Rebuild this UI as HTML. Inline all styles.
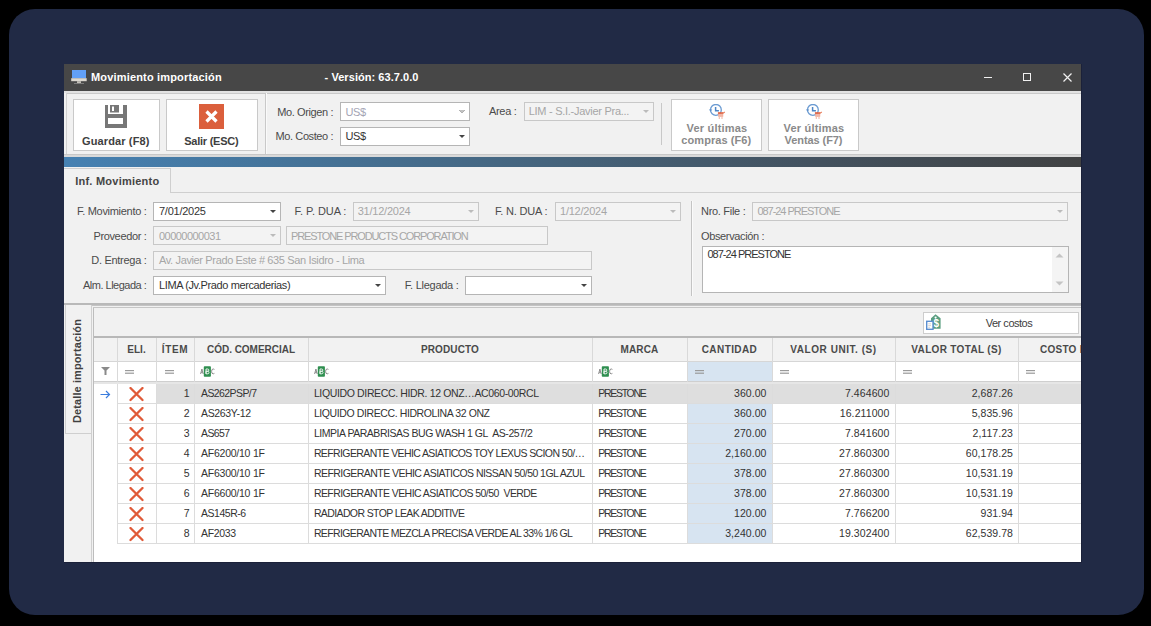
<!DOCTYPE html>
<html><head><meta charset="utf-8"><style>
html,body{margin:0;padding:0;width:1151px;height:626px;overflow:hidden;background:#000}
body>div,body>svg{position:absolute}
.t{position:absolute;white-space:nowrap;line-height:1;font-family:"Liberation Sans", sans-serif}
</style></head><body>
<div style="left:0px;top:0px;width:1151px;height:626px;background:#000"></div><div style="left:9px;top:9px;width:1135px;height:606px;background:#212a45;border-radius:26px"></div><div style="left:64px;top:64px;width:1017px;height:498px;background:#f1f1f1"></div><div style="left:64px;top:64px;width:1017px;height:27px;background:#474747"></div><svg style="position:absolute;left:71px;top:69px" width="16" height="16" viewBox="0 0 16 16"><rect x="1" y="1" width="14" height="8.2" fill="#62a0f7"/><rect x="0.2" y="9.2" width="15.5" height="3" fill="#dcd8d0"/><rect x="6" y="12.2" width="4" height="1.8" fill="#c4c0b8"/><rect x="3" y="14" width="10" height="0.8" fill="#8a8a8a"/></svg><div class="t" style="left:91px;top:71.69px;font-size:11px;font-weight:bold;color:#ffffff;letter-spacing:0.166px;">Movimiento importación</div><div class="t" style="left:324.6px;top:71.69px;font-size:11px;font-weight:bold;color:#ffffff;letter-spacing:0.053px;">- Versión: 63.7.0.0</div><div style="left:984px;top:77px;width:8px;height:1px;background:#f0f0f0"></div><div style="left:1023px;top:73px;width:8px;height:8px;border:1px solid #f0f0f0;box-sizing:border-box"></div><svg style="position:absolute;left:1063px;top:73px" width="9" height="9" viewBox="0 0 9 9"><path d="M0.5 0.5 L8.5 8.5 M8.5 0.5 L0.5 8.5" stroke="#f0f0f0" stroke-width="1.2"/></svg><div style="left:64px;top:91px;width:1017px;height:2px;background:#e2e2e2"></div><div style="left:66px;top:93px;width:1015px;height:1px;background:#c9c9c9"></div><div style="left:66px;top:93px;width:1px;height:61px;background:#d2d2d2"></div><div style="left:64px;top:154px;width:1017px;height:1px;background:#c8c8c8"></div><div style="left:73px;top:99px;width:87px;height:52px;background:#fff;border:1px solid #c9c9c9;box-sizing:border-box"></div><div style="left:166px;top:99px;width:92px;height:52px;background:#fff;border:1px solid #c9c9c9;box-sizing:border-box"></div><svg style="position:absolute;left:105px;top:105px" width="22" height="23" viewBox="0 0 22 23"><g fill="#777"><rect x="0" y="0" width="3" height="23"/><rect x="18" y="0" width="4" height="23"/><rect x="0" y="19" width="22" height="4"/><rect x="0" y="9" width="22" height="4"/><rect x="5" y="0" width="9" height="7.5"/></g><rect x="7" y="1.5" width="2" height="4.5" fill="#fff"/></svg><div class="t" style="left:82px;top:135.69px;font-size:11px;font-weight:bold;color:#404040;letter-spacing:0.126px;">Guardar (F8)</div><svg style="position:absolute;left:199px;top:104px" width="25" height="25" viewBox="0 0 25 25"><rect width="25" height="25" fill="#db5f3c"/><path d="M7.5 7.5 L17.5 17.5 M17.5 7.5 L7.5 17.5" stroke="#fff" stroke-width="3.2"/></svg><div class="t" style="left:184.2px;top:135.69px;font-size:11px;font-weight:bold;color:#404040;letter-spacing:-0.235px;">Salir (ESC)</div><div style="left:265px;top:93px;width:1px;height:61px;background:#c9c9c9"></div><div style="left:266px;top:93px;width:1px;height:61px;background:#fafafa"></div><div class="t" style="left:277.3px;top:107.19px;font-size:11px;font-weight:normal;color:#4b4b4b;letter-spacing:-0.393px;">Mo. Origen :</div><div style="left:340px;top:102px;width:130px;height:19px;background:#fff;border:1px solid #b5b5b5;box-sizing:border-box"></div><svg style="position:absolute;left:459px;top:110px" width="6" height="4" viewBox="0 0 6 4"><path d="M0 0 L6 0 L3 3Z" fill="#444"/></svg><svg style="position:absolute;left:459px;top:110px" width="6" height="4" viewBox="0 0 6 4"><path d="M0 0 L6 0 L3 3Z" fill="#c2c2c2"/></svg><div class="t" style="left:345.4px;top:107.19px;font-size:11px;font-weight:normal;color:#a4a4b4;letter-spacing:-0.3px;">US$</div><div class="t" style="left:275.6px;top:131.49px;font-size:11px;font-weight:normal;color:#4b4b4b;letter-spacing:-0.405px;">Mo. Costeo :</div><div style="left:340px;top:127px;width:130px;height:19px;background:#fff;border:1px solid #b5b5b5;box-sizing:border-box"></div><svg style="position:absolute;left:459px;top:135px" width="6" height="4" viewBox="0 0 6 4"><path d="M0 0 L6 0 L3 3Z" fill="#444"/></svg><div class="t" style="left:345.4px;top:131.49px;font-size:11px;font-weight:normal;color:#333333;letter-spacing:-0.3px;">US$</div><div class="t" style="left:489px;top:106.39px;font-size:11px;font-weight:normal;color:#4b4b4b;letter-spacing:-0.33px;">Area :</div><div style="left:524px;top:102px;width:130px;height:19px;background:#f3f3f3;border:1px solid #c8c8c8;box-sizing:border-box"></div><svg style="position:absolute;left:643px;top:110px" width="6" height="4" viewBox="0 0 6 4"><path d="M0 0 L6 0 L3 3Z" fill="#bbb"/></svg><div class="t" style="left:528.7px;top:106.39px;font-size:11px;font-weight:normal;color:#a6a6a6;letter-spacing:-0.272px;">LIM - S.I.-Javier Pra...</div><div style="left:661px;top:103px;width:1px;height:42px;background:#c8c8c8"></div><div style="left:671px;top:99px;width:91px;height:52px;background:#fff;border:1px solid #c9c9c9;box-sizing:border-box"></div><div style="left:768px;top:99px;width:91px;height:52px;background:#fff;border:1px solid #c9c9c9;box-sizing:border-box"></div><svg style="position:absolute;left:708px;top:104px" width="18" height="17" viewBox="0 0 18 17"><circle cx="7.9" cy="5.9" r="5.4" fill="none" stroke="#6b9bd2" stroke-width="1.3"/><path d="M7.6 3 V6.8 H10.9" fill="none" stroke="#4f86c6" stroke-width="1.5"/><path d="M0.9 5.4 L4.3 5.4 L2.6 7.6 Z" fill="#5b8fcc"/><rect x="9.9" y="8.2" width="5.6" height="1.7" fill="#e0603d"/><rect x="10.2" y="9.9" width="5" height="2.8" fill="#eea08a"/><path d="M10.6 11 H14.8" stroke="#fff" stroke-width="0.5"/><path d="M15.3 9 L16.8 8" stroke="#e8805f" stroke-width="1.1"/><circle cx="11.3" cy="14.1" r="0.75" fill="#eea08a"/><circle cx="14" cy="14.1" r="0.75" fill="#eea08a"/></svg><svg style="position:absolute;left:805px;top:104px" width="18" height="17" viewBox="0 0 18 17"><circle cx="7.9" cy="5.9" r="5.4" fill="none" stroke="#6b9bd2" stroke-width="1.3"/><path d="M7.6 3 V6.8 H10.9" fill="none" stroke="#4f86c6" stroke-width="1.5"/><path d="M0.9 5.4 L4.3 5.4 L2.6 7.6 Z" fill="#5b8fcc"/><rect x="9.9" y="8.2" width="5.6" height="1.7" fill="#e0603d"/><rect x="10.2" y="9.9" width="5" height="2.8" fill="#eea08a"/><path d="M10.6 11 H14.8" stroke="#fff" stroke-width="0.5"/><path d="M15.3 9 L16.8 8" stroke="#e8805f" stroke-width="1.1"/><circle cx="11.3" cy="14.1" r="0.75" fill="#eea08a"/><circle cx="14" cy="14.1" r="0.75" fill="#eea08a"/></svg><div class="t" style="left:617.0px;top:122.69px;width:200px;text-align:center;font-size:11px;font-weight:bold;color:#8a8a8a;letter-spacing:0.19px;">Ver últimas</div><div class="t" style="left:616.3px;top:134.69px;width:200px;text-align:center;font-size:11px;font-weight:bold;color:#8a8a8a;letter-spacing:0.075px;">compras (F6)</div><div class="t" style="left:714.0px;top:122.69px;width:200px;text-align:center;font-size:11px;font-weight:bold;color:#8a8a8a;letter-spacing:0.19px;">Ver últimas</div><div class="t" style="left:713.5px;top:134.69px;width:200px;text-align:center;font-size:11px;font-weight:bold;color:#8a8a8a;letter-spacing:-0.069px;">Ventas (F7)</div><div style="left:64px;top:157px;width:1017px;height:10px;background:linear-gradient(to right,#4681b2 0%,#457398 23.5%,#45637b 49%,#43515e 74.6%,#414243 100%)"></div><div style="left:64px;top:155px;width:1017px;height:2px;background:#d9d9d9"></div><div style="left:64px;top:192px;width:1017px;height:1px;background:#cfcfcf"></div><div style="left:64px;top:168px;width:107px;height:25px;background:#f1f1f1;border-top:1px solid #cfcfcf;border-right:1px solid #cfcfcf;box-sizing:border-box"></div><div class="t" style="left:75.2px;top:175.69px;font-size:11px;font-weight:bold;color:#454545;letter-spacing:0.238px;">Inf. Movimiento</div><div class="t" style="left:77px;top:205.69px;font-size:11px;font-weight:normal;color:#4b4b4b;letter-spacing:-0.298px;">F. Movimiento :</div><div style="left:153px;top:202px;width:128px;height:19px;background:#fff;border:1px solid #b5b5b5;box-sizing:border-box"></div><svg style="position:absolute;left:270px;top:210px" width="6" height="4" viewBox="0 0 6 4"><path d="M0 0 L6 0 L3 3Z" fill="#444"/></svg><div class="t" style="left:159px;top:205.69px;font-size:11px;font-weight:normal;color:#333333;letter-spacing:-0.255px;">7/01/2025</div><div class="t" style="left:93.4px;top:230.69px;font-size:11px;font-weight:normal;color:#4b4b4b;letter-spacing:-0.347px;">Proveedor :</div><div style="left:153px;top:226px;width:128px;height:19px;background:#f3f3f3;border:1px solid #c8c8c8;box-sizing:border-box"></div><svg style="position:absolute;left:270px;top:234px" width="6" height="4" viewBox="0 0 6 4"><path d="M0 0 L6 0 L3 3Z" fill="#bbb"/></svg><div class="t" style="left:159px;top:230.69px;font-size:11px;font-weight:normal;color:#a6a6a6;letter-spacing:-0.53px;">00000000031</div><div style="left:286px;top:226px;width:262px;height:19px;background:#f3f3f3;border:1px solid #c8c8c8;box-sizing:border-box"></div><div class="t" style="left:291px;top:230.69px;font-size:11px;font-weight:normal;color:#a6a6a6;letter-spacing:-1.126px;">PRESTONE PRODUCTS CORPORATION</div><div class="t" style="left:91.3px;top:255.19px;font-size:11px;font-weight:normal;color:#4b4b4b;letter-spacing:-0.291px;">D. Entrega :</div><div style="left:153px;top:251px;width:439px;height:19px;background:#f3f3f3;border:1px solid #c8c8c8;box-sizing:border-box"></div><div class="t" style="left:159px;top:255.19px;font-size:11px;font-weight:normal;color:#a6a6a6;letter-spacing:-0.36px;">Av. Javier Prado Este # 635 San Isidro - Lima</div><div class="t" style="left:83px;top:279.69px;font-size:11px;font-weight:normal;color:#4b4b4b;letter-spacing:-0.502px;">Alm. Llegada :</div><div style="left:153px;top:276px;width:233px;height:19px;background:#fff;border:1px solid #b5b5b5;box-sizing:border-box"></div><svg style="position:absolute;left:375px;top:284px" width="6" height="4" viewBox="0 0 6 4"><path d="M0 0 L6 0 L3 3Z" fill="#444"/></svg><div class="t" style="left:159px;top:279.69px;font-size:11px;font-weight:normal;color:#333333;letter-spacing:-0.386px;">LIMA (Jv.Prado mercaderias)</div><div class="t" style="left:294.6px;top:205.69px;font-size:11px;font-weight:normal;color:#4b4b4b;letter-spacing:-0.057px;">F. P. DUA :</div><div style="left:353px;top:202px;width:126px;height:19px;background:#f3f3f3;border:1px solid #c8c8c8;box-sizing:border-box"></div><svg style="position:absolute;left:468px;top:210px" width="6" height="4" viewBox="0 0 6 4"><path d="M0 0 L6 0 L3 3Z" fill="#bbb"/></svg><div class="t" style="left:357.7px;top:205.69px;font-size:11px;font-weight:normal;color:#a6a6a6;letter-spacing:-0.228px;">31/12/2024</div><div class="t" style="left:495px;top:205.69px;font-size:11px;font-weight:normal;color:#4b4b4b;letter-spacing:-0.19px;">F. N. DUA :</div><div style="left:555px;top:202px;width:126px;height:19px;background:#f3f3f3;border:1px solid #c8c8c8;box-sizing:border-box"></div><svg style="position:absolute;left:670px;top:210px" width="6" height="4" viewBox="0 0 6 4"><path d="M0 0 L6 0 L3 3Z" fill="#bbb"/></svg><div class="t" style="left:560px;top:205.69px;font-size:11px;font-weight:normal;color:#a6a6a6;letter-spacing:-0.242px;">1/12/2024</div><div class="t" style="left:404.8px;top:279.69px;font-size:11px;font-weight:normal;color:#4b4b4b;letter-spacing:-0.261px;">F. Llegada :</div><div style="left:465px;top:276px;width:127px;height:19px;background:#fff;border:1px solid #b5b5b5;box-sizing:border-box"></div><svg style="position:absolute;left:581px;top:284px" width="6" height="4" viewBox="0 0 6 4"><path d="M0 0 L6 0 L3 3Z" fill="#444"/></svg><div style="left:691px;top:201px;width:1px;height:95px;background:#c4c4c4"></div><div style="left:692px;top:201px;width:1px;height:95px;background:#fafafa"></div><div class="t" style="left:701px;top:205.69px;font-size:11px;font-weight:normal;color:#4b4b4b;letter-spacing:-0.297px;">Nro. File :</div><div style="left:752px;top:202px;width:316px;height:19px;background:#f3f3f3;border:1px solid #c8c8c8;box-sizing:border-box"></div><svg style="position:absolute;left:1057px;top:210px" width="6" height="4" viewBox="0 0 6 4"><path d="M0 0 L6 0 L3 3Z" fill="#bbb"/></svg><div class="t" style="left:757.4px;top:205.69px;font-size:11px;font-weight:normal;color:#a6a6a6;letter-spacing:-1.03px;">087-24 PRESTONE</div><div class="t" style="left:701px;top:230.69px;font-size:11px;font-weight:normal;color:#4b4b4b;letter-spacing:-0.364px;">Observación :</div><div style="left:702px;top:246px;width:367px;height:47px;background:#fff;border:1px solid #b5b5b5;box-sizing:border-box"></div><div style="left:1052px;top:247px;width:16px;height:45px;background:#f4f4f4"></div><svg style="position:absolute;left:1055px;top:253px" width="9" height="5" viewBox="0 0 9 5"><path d="M0.5 4.5 L4.5 0.5 L8.5 4.5Z" fill="#c4c4c4"/></svg><svg style="position:absolute;left:1055px;top:281px" width="9" height="5" viewBox="0 0 9 5"><path d="M0.5 0.5 L4.5 4.5 L8.5 0.5Z" fill="#c4c4c4"/></svg><div class="t" style="left:707.4px;top:248.69px;font-size:11px;font-weight:normal;color:#333333;letter-spacing:-0.973px;">087-24 PRESTONE</div><div style="left:64px;top:303px;width:1017px;height:2px;background:#b9b9b9"></div><div style="left:64px;top:305px;width:29px;height:257px;background:#f1f1f1"></div><div style="left:65px;top:305px;width:27px;height:129px;background:#f1f1f1;border:1px solid #cfcfcf;border-top:none;box-sizing:border-box"></div><div style="left:91px;top:305px;width:1px;height:257px;background:#d0d0d0"></div><div style="left:92px;top:305px;width:989px;height:1px;background:#c4c4c4"></div><div class="t" style="left:77px;top:371px;width:0;height:0;"><div style="position:absolute;left:-52px;top:-7px;width:104px;height:14px;line-height:14px;text-align:center;transform:rotate(-90deg);font-size:11px;font-weight:bold;color:#404040;letter-spacing:0.1px;white-space:nowrap">Detalle importación</div></div><div style="left:93px;top:307px;width:1px;height:255px;background:#bdbdbd"></div><div style="left:93px;top:307px;width:988px;height:1px;background:#c6c6c6"></div><div style="left:94px;top:308px;width:987px;height:254px;background:#fff"></div><div style="left:94px;top:308px;width:987px;height:28px;background:#f1f1f1"></div><div style="left:94px;top:336px;width:987px;height:2px;background:#b8b8b8"></div><div style="left:923px;top:312px;width:156px;height:22px;background:#fff;border:1px solid #cdcdcd;box-sizing:border-box"></div><svg style="position:absolute;left:926px;top:314px" width="16" height="17" viewBox="0 0 16 17"><path d="M5 4.3 L9.5 0.3 L14.6 4.3 L14.6 14.8 L5 14.8 Z" fill="#5a9e80"/><circle cx="9.6" cy="3.6" r="1.1" fill="#fff"/><text x="10.4" y="13.4" font-size="10" font-weight="bold" fill="#fff" text-anchor="middle" font-family="Liberation Sans">$</text><rect x="0.7" y="7.3" width="6.3" height="8" fill="#fff" stroke="#5b8fd0" stroke-width="1.4"/><path d="M2.2 9.8 H5 M2.2 11.6 H5 M2.2 13.3 H4" stroke="#bbb" stroke-width="0.6"/></svg><div class="t" style="left:949.0px;top:317.69px;width:120px;text-align:center;font-size:11px;font-weight:normal;color:#404040;letter-spacing:-0.484px;">Ver costos</div><div style="left:94px;top:338px;width:987px;height:23px;background:#f2f2f2"></div><div style="left:94px;top:361px;width:987px;height:1px;background:#d6d6d6"></div><div style="left:94px;top:362px;width:987px;height:19px;background:#fff"></div><div style="left:687px;top:362px;width:85px;height:19px;background:#d7e4f1"></div><div style="left:94px;top:381px;width:987px;height:1px;background:#cfcfcf"></div><div style="left:94px;top:382px;width:987px;height:2px;background:#e6e6e6"></div><div style="left:117px;top:338px;width:1px;height:44px;background:#d9d9d9"></div><div style="left:156px;top:338px;width:1px;height:44px;background:#d9d9d9"></div><div style="left:194px;top:338px;width:1px;height:44px;background:#d9d9d9"></div><div style="left:308px;top:338px;width:1px;height:44px;background:#d9d9d9"></div><div style="left:592px;top:338px;width:1px;height:44px;background:#d9d9d9"></div><div style="left:687px;top:338px;width:1px;height:44px;background:#d9d9d9"></div><div style="left:772px;top:338px;width:1px;height:44px;background:#d9d9d9"></div><div style="left:895px;top:338px;width:1px;height:44px;background:#d9d9d9"></div><div style="left:1018px;top:338px;width:1px;height:44px;background:#d9d9d9"></div><div class="t" style="left:36.5px;top:344.54px;width:200px;text-align:center;font-size:10px;font-weight:bold;color:#4a4a4a;letter-spacing:0.055px;">ELI.</div><div class="t" style="left:75.0px;top:344.54px;width:200px;text-align:center;font-size:10px;font-weight:bold;color:#4a4a4a;letter-spacing:0.671px;">ÍTEM</div><div class="t" style="left:151.0px;top:344.54px;width:200px;text-align:center;font-size:10px;font-weight:bold;color:#4a4a4a;letter-spacing:-0.025px;">CÓD. COMERCIAL</div><div class="t" style="left:350.0px;top:344.54px;width:200px;text-align:center;font-size:10px;font-weight:bold;color:#4a4a4a;letter-spacing:0.123px;">PRODUCTO</div><div class="t" style="left:539.5px;top:344.54px;width:200px;text-align:center;font-size:10px;font-weight:bold;color:#4a4a4a;letter-spacing:0.146px;">MARCA</div><div class="t" style="left:629.5px;top:344.54px;width:200px;text-align:center;font-size:10px;font-weight:bold;color:#4a4a4a;letter-spacing:0.412px;">CANTIDAD</div><div class="t" style="left:733.5px;top:344.54px;width:200px;text-align:center;font-size:10px;font-weight:bold;color:#4a4a4a;letter-spacing:0.547px;">VALOR UNIT. (S)</div><div class="t" style="left:856.5px;top:344.54px;width:200px;text-align:center;font-size:10px;font-weight:bold;color:#4a4a4a;letter-spacing:0.331px;">VALOR TOTAL (S)</div><div class="t" style="left:1040px;top:344.54px;font-size:10px;font-weight:bold;color:#4a4a4a;letter-spacing:0.25px;">COSTO I</div><svg style="position:absolute;left:101px;top:367px" width="9" height="8" viewBox="0 0 9 8"><path d="M0 0 H9 L5.5 3.5 V8 H3.5 V3.5 Z" fill="#8a8a8a"/></svg><svg style="position:absolute;left:125px;top:370px" width="9" height="4" viewBox="0 0 9 4"><rect x="0" y="0" width="9" height="1.2" fill="#9a9a9a"/><rect x="0" y="2.6" width="9" height="1.2" fill="#9a9a9a"/></svg><svg style="position:absolute;left:165px;top:370px" width="9" height="4" viewBox="0 0 9 4"><rect x="0" y="0" width="9" height="1.2" fill="#9a9a9a"/><rect x="0" y="2.6" width="9" height="1.2" fill="#9a9a9a"/></svg><svg style="position:absolute;left:200px;top:366px" width="16" height="11" viewBox="0 0 16 11"><path d="M0.6 8 L1.9 3 L3.2 8 M1 6.3 H2.8" fill="none" stroke="#8c8c8c" stroke-width="1"/><rect x="3.8" y="0.2" width="7.1" height="10.6" rx="0.8" fill="#2f8f50"/><path d="M6 3 H7.8 Q8.8 3 8.8 4.2 Q8.8 5.3 7.6 5.3 H6 M6 5.3 H7.9 Q9 5.3 9 6.6 Q9 7.8 7.8 7.8 H6 Z M6 3 V7.8" fill="none" stroke="#e8f3ec" stroke-width="1"/><path d="M14.4 3.4 Q13.8 3 13.1 3 Q11.6 3 11.6 5.4 Q11.6 7.8 13.1 7.8 Q13.8 7.8 14.4 7.4" fill="none" stroke="#8c8c8c" stroke-width="1"/></svg><svg style="position:absolute;left:314px;top:366px" width="16" height="11" viewBox="0 0 16 11"><path d="M0.6 8 L1.9 3 L3.2 8 M1 6.3 H2.8" fill="none" stroke="#8c8c8c" stroke-width="1"/><rect x="3.8" y="0.2" width="7.1" height="10.6" rx="0.8" fill="#2f8f50"/><path d="M6 3 H7.8 Q8.8 3 8.8 4.2 Q8.8 5.3 7.6 5.3 H6 M6 5.3 H7.9 Q9 5.3 9 6.6 Q9 7.8 7.8 7.8 H6 Z M6 3 V7.8" fill="none" stroke="#e8f3ec" stroke-width="1"/><path d="M14.4 3.4 Q13.8 3 13.1 3 Q11.6 3 11.6 5.4 Q11.6 7.8 13.1 7.8 Q13.8 7.8 14.4 7.4" fill="none" stroke="#8c8c8c" stroke-width="1"/></svg><svg style="position:absolute;left:598px;top:366px" width="16" height="11" viewBox="0 0 16 11"><path d="M0.6 8 L1.9 3 L3.2 8 M1 6.3 H2.8" fill="none" stroke="#8c8c8c" stroke-width="1"/><rect x="3.8" y="0.2" width="7.1" height="10.6" rx="0.8" fill="#2f8f50"/><path d="M6 3 H7.8 Q8.8 3 8.8 4.2 Q8.8 5.3 7.6 5.3 H6 M6 5.3 H7.9 Q9 5.3 9 6.6 Q9 7.8 7.8 7.8 H6 Z M6 3 V7.8" fill="none" stroke="#e8f3ec" stroke-width="1"/><path d="M14.4 3.4 Q13.8 3 13.1 3 Q11.6 3 11.6 5.4 Q11.6 7.8 13.1 7.8 Q13.8 7.8 14.4 7.4" fill="none" stroke="#8c8c8c" stroke-width="1"/></svg><svg style="position:absolute;left:695px;top:370px" width="9" height="4" viewBox="0 0 9 4"><rect x="0" y="0" width="9" height="1.2" fill="#9a9a9a"/><rect x="0" y="2.6" width="9" height="1.2" fill="#9a9a9a"/></svg><svg style="position:absolute;left:780px;top:370px" width="9" height="4" viewBox="0 0 9 4"><rect x="0" y="0" width="9" height="1.2" fill="#9a9a9a"/><rect x="0" y="2.6" width="9" height="1.2" fill="#9a9a9a"/></svg><svg style="position:absolute;left:903px;top:370px" width="9" height="4" viewBox="0 0 9 4"><rect x="0" y="0" width="9" height="1.2" fill="#9a9a9a"/><rect x="0" y="2.6" width="9" height="1.2" fill="#9a9a9a"/></svg><svg style="position:absolute;left:1026px;top:370px" width="9" height="4" viewBox="0 0 9 4"><rect x="0" y="0" width="9" height="1.2" fill="#9a9a9a"/><rect x="0" y="2.6" width="9" height="1.2" fill="#9a9a9a"/></svg><div style="left:156px;top:384px;width:925px;height:19px;background:#dedede"></div><div style="left:117px;top:403px;width:964px;height:1px;background:#dcdcdc"></div><div style="left:117px;top:384px;width:1px;height:20px;background:#dcdcdc"></div><div style="left:156px;top:384px;width:1px;height:20px;background:#dcdcdc"></div><div style="left:194px;top:384px;width:1px;height:20px;background:#dcdcdc"></div><div style="left:308px;top:384px;width:1px;height:20px;background:#dcdcdc"></div><div style="left:592px;top:384px;width:1px;height:20px;background:#dcdcdc"></div><div style="left:687px;top:384px;width:1px;height:20px;background:#dcdcdc"></div><div style="left:772px;top:384px;width:1px;height:20px;background:#dcdcdc"></div><div style="left:895px;top:384px;width:1px;height:20px;background:#dcdcdc"></div><div style="left:1018px;top:384px;width:1px;height:20px;background:#dcdcdc"></div><svg style="position:absolute;left:129px;top:387px" width="15" height="15" viewBox="0 0 15 15"><path d="M1.5 1 L13.5 13 M13.5 1 L1.5 13" stroke="#e05a38" stroke-width="2.3" stroke-linecap="round"/></svg><div class="t" style="left:-410.5px;top:388.31px;width:600px;text-align:right;font-size:10.5px;font-weight:normal;color:#333333;">1</div><div class="t" style="left:201px;top:388.31px;font-size:10.5px;font-weight:normal;color:#333333;letter-spacing:-0.588px;">AS262PSP/7</div><div class="t" style="left:313.9px;top:388.31px;font-size:10.5px;font-weight:normal;color:#333333;letter-spacing:-0.36px;">LIQUIDO DIRECC. HIDR. 12 ONZ…AC060-00RCL</div><div class="t" style="left:598.2px;top:388.31px;font-size:10.5px;font-weight:normal;color:#333333;letter-spacing:-1.282px;">PRESTONE</div><div class="t" style="left:166.5px;top:388.31px;width:600px;text-align:right;font-size:10.5px;font-weight:normal;color:#333333;letter-spacing:0.05px;">360.00</div><div class="t" style="left:289.5px;top:388.31px;width:600px;text-align:right;font-size:10.5px;font-weight:normal;color:#333333;letter-spacing:0.1px;">7.464600</div><div class="t" style="left:413px;top:388.31px;width:600px;text-align:right;font-size:10.5px;font-weight:normal;color:#333333;letter-spacing:0.05px;">2,687.26</div><div style="left:687px;top:404px;width:85px;height:19px;background:#d7e4f1"></div><div style="left:117px;top:423px;width:964px;height:1px;background:#dcdcdc"></div><div style="left:117px;top:404px;width:1px;height:20px;background:#dcdcdc"></div><div style="left:156px;top:404px;width:1px;height:20px;background:#dcdcdc"></div><div style="left:194px;top:404px;width:1px;height:20px;background:#dcdcdc"></div><div style="left:308px;top:404px;width:1px;height:20px;background:#dcdcdc"></div><div style="left:592px;top:404px;width:1px;height:20px;background:#dcdcdc"></div><div style="left:687px;top:404px;width:1px;height:20px;background:#dcdcdc"></div><div style="left:772px;top:404px;width:1px;height:20px;background:#dcdcdc"></div><div style="left:895px;top:404px;width:1px;height:20px;background:#dcdcdc"></div><div style="left:1018px;top:404px;width:1px;height:20px;background:#dcdcdc"></div><svg style="position:absolute;left:129px;top:407px" width="15" height="15" viewBox="0 0 15 15"><path d="M1.5 1 L13.5 13 M13.5 1 L1.5 13" stroke="#e05a38" stroke-width="2.3" stroke-linecap="round"/></svg><div class="t" style="left:-410.5px;top:408.31px;width:600px;text-align:right;font-size:10.5px;font-weight:normal;color:#333333;">2</div><div class="t" style="left:201px;top:408.31px;font-size:10.5px;font-weight:normal;color:#333333;letter-spacing:-0.343px;">AS263Y-12</div><div class="t" style="left:313.9px;top:408.31px;font-size:10.5px;font-weight:normal;color:#333333;letter-spacing:-0.398px;">LIQUIDO DIRECC. HIDROLINA 32 ONZ</div><div class="t" style="left:598.2px;top:408.31px;font-size:10.5px;font-weight:normal;color:#333333;letter-spacing:-1.282px;">PRESTONE</div><div class="t" style="left:166.5px;top:408.31px;width:600px;text-align:right;font-size:10.5px;font-weight:normal;color:#333333;letter-spacing:0.05px;">360.00</div><div class="t" style="left:289.5px;top:408.31px;width:600px;text-align:right;font-size:10.5px;font-weight:normal;color:#333333;letter-spacing:0.1px;">16.211000</div><div class="t" style="left:413px;top:408.31px;width:600px;text-align:right;font-size:10.5px;font-weight:normal;color:#333333;letter-spacing:0.05px;">5,835.96</div><div style="left:687px;top:424px;width:85px;height:19px;background:#d7e4f1"></div><div style="left:117px;top:443px;width:964px;height:1px;background:#dcdcdc"></div><div style="left:117px;top:424px;width:1px;height:20px;background:#dcdcdc"></div><div style="left:156px;top:424px;width:1px;height:20px;background:#dcdcdc"></div><div style="left:194px;top:424px;width:1px;height:20px;background:#dcdcdc"></div><div style="left:308px;top:424px;width:1px;height:20px;background:#dcdcdc"></div><div style="left:592px;top:424px;width:1px;height:20px;background:#dcdcdc"></div><div style="left:687px;top:424px;width:1px;height:20px;background:#dcdcdc"></div><div style="left:772px;top:424px;width:1px;height:20px;background:#dcdcdc"></div><div style="left:895px;top:424px;width:1px;height:20px;background:#dcdcdc"></div><div style="left:1018px;top:424px;width:1px;height:20px;background:#dcdcdc"></div><svg style="position:absolute;left:129px;top:427px" width="15" height="15" viewBox="0 0 15 15"><path d="M1.5 1 L13.5 13 M13.5 1 L1.5 13" stroke="#e05a38" stroke-width="2.3" stroke-linecap="round"/></svg><div class="t" style="left:-410.5px;top:428.31px;width:600px;text-align:right;font-size:10.5px;font-weight:normal;color:#333333;">3</div><div class="t" style="left:201px;top:428.31px;font-size:10.5px;font-weight:normal;color:#333333;letter-spacing:-0.582px;">AS657</div><div class="t" style="left:313.9px;top:428.31px;font-size:10.5px;font-weight:normal;color:#333333;letter-spacing:-0.465px;">LIMPIA PARABRISAS BUG WASH 1 GL&nbsp; AS-257/2</div><div class="t" style="left:598.2px;top:428.31px;font-size:10.5px;font-weight:normal;color:#333333;letter-spacing:-1.282px;">PRESTONE</div><div class="t" style="left:166.5px;top:428.31px;width:600px;text-align:right;font-size:10.5px;font-weight:normal;color:#333333;letter-spacing:0.05px;">270.00</div><div class="t" style="left:289.5px;top:428.31px;width:600px;text-align:right;font-size:10.5px;font-weight:normal;color:#333333;letter-spacing:0.1px;">7.841600</div><div class="t" style="left:413px;top:428.31px;width:600px;text-align:right;font-size:10.5px;font-weight:normal;color:#333333;letter-spacing:0.05px;">2,117.23</div><div style="left:687px;top:444px;width:85px;height:19px;background:#d7e4f1"></div><div style="left:117px;top:463px;width:964px;height:1px;background:#dcdcdc"></div><div style="left:117px;top:444px;width:1px;height:20px;background:#dcdcdc"></div><div style="left:156px;top:444px;width:1px;height:20px;background:#dcdcdc"></div><div style="left:194px;top:444px;width:1px;height:20px;background:#dcdcdc"></div><div style="left:308px;top:444px;width:1px;height:20px;background:#dcdcdc"></div><div style="left:592px;top:444px;width:1px;height:20px;background:#dcdcdc"></div><div style="left:687px;top:444px;width:1px;height:20px;background:#dcdcdc"></div><div style="left:772px;top:444px;width:1px;height:20px;background:#dcdcdc"></div><div style="left:895px;top:444px;width:1px;height:20px;background:#dcdcdc"></div><div style="left:1018px;top:444px;width:1px;height:20px;background:#dcdcdc"></div><svg style="position:absolute;left:129px;top:447px" width="15" height="15" viewBox="0 0 15 15"><path d="M1.5 1 L13.5 13 M13.5 1 L1.5 13" stroke="#e05a38" stroke-width="2.3" stroke-linecap="round"/></svg><div class="t" style="left:-410.5px;top:448.31px;width:600px;text-align:right;font-size:10.5px;font-weight:normal;color:#333333;">4</div><div class="t" style="left:201px;top:448.31px;font-size:10.5px;font-weight:normal;color:#333333;letter-spacing:-0.24px;">AF6200/10 1F</div><div class="t" style="left:313.9px;top:448.31px;font-size:10.5px;font-weight:normal;color:#333333;letter-spacing:-0.609px;">REFRIGERANTE VEHIC ASIATICOS TOY LEXUS SCION 50/…</div><div class="t" style="left:598.2px;top:448.31px;font-size:10.5px;font-weight:normal;color:#333333;letter-spacing:-1.282px;">PRESTONE</div><div class="t" style="left:166.5px;top:448.31px;width:600px;text-align:right;font-size:10.5px;font-weight:normal;color:#333333;letter-spacing:0.05px;">2,160.00</div><div class="t" style="left:289.5px;top:448.31px;width:600px;text-align:right;font-size:10.5px;font-weight:normal;color:#333333;letter-spacing:0.1px;">27.860300</div><div class="t" style="left:413px;top:448.31px;width:600px;text-align:right;font-size:10.5px;font-weight:normal;color:#333333;letter-spacing:0.05px;">60,178.25</div><div style="left:687px;top:464px;width:85px;height:19px;background:#d7e4f1"></div><div style="left:117px;top:483px;width:964px;height:1px;background:#dcdcdc"></div><div style="left:117px;top:464px;width:1px;height:20px;background:#dcdcdc"></div><div style="left:156px;top:464px;width:1px;height:20px;background:#dcdcdc"></div><div style="left:194px;top:464px;width:1px;height:20px;background:#dcdcdc"></div><div style="left:308px;top:464px;width:1px;height:20px;background:#dcdcdc"></div><div style="left:592px;top:464px;width:1px;height:20px;background:#dcdcdc"></div><div style="left:687px;top:464px;width:1px;height:20px;background:#dcdcdc"></div><div style="left:772px;top:464px;width:1px;height:20px;background:#dcdcdc"></div><div style="left:895px;top:464px;width:1px;height:20px;background:#dcdcdc"></div><div style="left:1018px;top:464px;width:1px;height:20px;background:#dcdcdc"></div><svg style="position:absolute;left:129px;top:467px" width="15" height="15" viewBox="0 0 15 15"><path d="M1.5 1 L13.5 13 M13.5 1 L1.5 13" stroke="#e05a38" stroke-width="2.3" stroke-linecap="round"/></svg><div class="t" style="left:-410.5px;top:468.31px;width:600px;text-align:right;font-size:10.5px;font-weight:normal;color:#333333;">5</div><div class="t" style="left:201px;top:468.31px;font-size:10.5px;font-weight:normal;color:#333333;letter-spacing:-0.24px;">AF6300/10 1F</div><div class="t" style="left:313.9px;top:468.31px;font-size:10.5px;font-weight:normal;color:#333333;letter-spacing:-0.541px;">REFRIGERANTE VEHIC ASIATICOS NISSAN 50/50 1GL AZUL</div><div class="t" style="left:598.2px;top:468.31px;font-size:10.5px;font-weight:normal;color:#333333;letter-spacing:-1.282px;">PRESTONE</div><div class="t" style="left:166.5px;top:468.31px;width:600px;text-align:right;font-size:10.5px;font-weight:normal;color:#333333;letter-spacing:0.05px;">378.00</div><div class="t" style="left:289.5px;top:468.31px;width:600px;text-align:right;font-size:10.5px;font-weight:normal;color:#333333;letter-spacing:0.1px;">27.860300</div><div class="t" style="left:413px;top:468.31px;width:600px;text-align:right;font-size:10.5px;font-weight:normal;color:#333333;letter-spacing:0.05px;">10,531.19</div><div style="left:687px;top:484px;width:85px;height:19px;background:#d7e4f1"></div><div style="left:117px;top:503px;width:964px;height:1px;background:#dcdcdc"></div><div style="left:117px;top:484px;width:1px;height:20px;background:#dcdcdc"></div><div style="left:156px;top:484px;width:1px;height:20px;background:#dcdcdc"></div><div style="left:194px;top:484px;width:1px;height:20px;background:#dcdcdc"></div><div style="left:308px;top:484px;width:1px;height:20px;background:#dcdcdc"></div><div style="left:592px;top:484px;width:1px;height:20px;background:#dcdcdc"></div><div style="left:687px;top:484px;width:1px;height:20px;background:#dcdcdc"></div><div style="left:772px;top:484px;width:1px;height:20px;background:#dcdcdc"></div><div style="left:895px;top:484px;width:1px;height:20px;background:#dcdcdc"></div><div style="left:1018px;top:484px;width:1px;height:20px;background:#dcdcdc"></div><svg style="position:absolute;left:129px;top:487px" width="15" height="15" viewBox="0 0 15 15"><path d="M1.5 1 L13.5 13 M13.5 1 L1.5 13" stroke="#e05a38" stroke-width="2.3" stroke-linecap="round"/></svg><div class="t" style="left:-410.5px;top:488.31px;width:600px;text-align:right;font-size:10.5px;font-weight:normal;color:#333333;">6</div><div class="t" style="left:201px;top:488.31px;font-size:10.5px;font-weight:normal;color:#333333;letter-spacing:-0.24px;">AF6600/10 1F</div><div class="t" style="left:313.9px;top:488.31px;font-size:10.5px;font-weight:normal;color:#333333;letter-spacing:-0.564px;">REFRIGERANTE VEHIC ASIATICOS 50/50&nbsp; VERDE</div><div class="t" style="left:598.2px;top:488.31px;font-size:10.5px;font-weight:normal;color:#333333;letter-spacing:-1.282px;">PRESTONE</div><div class="t" style="left:166.5px;top:488.31px;width:600px;text-align:right;font-size:10.5px;font-weight:normal;color:#333333;letter-spacing:0.05px;">378.00</div><div class="t" style="left:289.5px;top:488.31px;width:600px;text-align:right;font-size:10.5px;font-weight:normal;color:#333333;letter-spacing:0.1px;">27.860300</div><div class="t" style="left:413px;top:488.31px;width:600px;text-align:right;font-size:10.5px;font-weight:normal;color:#333333;letter-spacing:0.05px;">10,531.19</div><div style="left:687px;top:504px;width:85px;height:19px;background:#d7e4f1"></div><div style="left:117px;top:523px;width:964px;height:1px;background:#dcdcdc"></div><div style="left:117px;top:504px;width:1px;height:20px;background:#dcdcdc"></div><div style="left:156px;top:504px;width:1px;height:20px;background:#dcdcdc"></div><div style="left:194px;top:504px;width:1px;height:20px;background:#dcdcdc"></div><div style="left:308px;top:504px;width:1px;height:20px;background:#dcdcdc"></div><div style="left:592px;top:504px;width:1px;height:20px;background:#dcdcdc"></div><div style="left:687px;top:504px;width:1px;height:20px;background:#dcdcdc"></div><div style="left:772px;top:504px;width:1px;height:20px;background:#dcdcdc"></div><div style="left:895px;top:504px;width:1px;height:20px;background:#dcdcdc"></div><div style="left:1018px;top:504px;width:1px;height:20px;background:#dcdcdc"></div><svg style="position:absolute;left:129px;top:507px" width="15" height="15" viewBox="0 0 15 15"><path d="M1.5 1 L13.5 13 M13.5 1 L1.5 13" stroke="#e05a38" stroke-width="2.3" stroke-linecap="round"/></svg><div class="t" style="left:-410.5px;top:508.31px;width:600px;text-align:right;font-size:10.5px;font-weight:normal;color:#333333;">7</div><div class="t" style="left:201px;top:508.31px;font-size:10.5px;font-weight:normal;color:#333333;letter-spacing:-0.478px;">AS145R-6</div><div class="t" style="left:313.9px;top:508.31px;font-size:10.5px;font-weight:normal;color:#333333;letter-spacing:-0.615px;">RADIADOR STOP LEAK ADDITIVE</div><div class="t" style="left:598.2px;top:508.31px;font-size:10.5px;font-weight:normal;color:#333333;letter-spacing:-1.282px;">PRESTONE</div><div class="t" style="left:166.5px;top:508.31px;width:600px;text-align:right;font-size:10.5px;font-weight:normal;color:#333333;letter-spacing:0.05px;">120.00</div><div class="t" style="left:289.5px;top:508.31px;width:600px;text-align:right;font-size:10.5px;font-weight:normal;color:#333333;letter-spacing:0.1px;">7.766200</div><div class="t" style="left:413px;top:508.31px;width:600px;text-align:right;font-size:10.5px;font-weight:normal;color:#333333;letter-spacing:0.05px;">931.94</div><div style="left:687px;top:524px;width:85px;height:19px;background:#d7e4f1"></div><div style="left:117px;top:543px;width:964px;height:1px;background:#dcdcdc"></div><div style="left:117px;top:524px;width:1px;height:20px;background:#dcdcdc"></div><div style="left:156px;top:524px;width:1px;height:20px;background:#dcdcdc"></div><div style="left:194px;top:524px;width:1px;height:20px;background:#dcdcdc"></div><div style="left:308px;top:524px;width:1px;height:20px;background:#dcdcdc"></div><div style="left:592px;top:524px;width:1px;height:20px;background:#dcdcdc"></div><div style="left:687px;top:524px;width:1px;height:20px;background:#dcdcdc"></div><div style="left:772px;top:524px;width:1px;height:20px;background:#dcdcdc"></div><div style="left:895px;top:524px;width:1px;height:20px;background:#dcdcdc"></div><div style="left:1018px;top:524px;width:1px;height:20px;background:#dcdcdc"></div><svg style="position:absolute;left:129px;top:527px" width="15" height="15" viewBox="0 0 15 15"><path d="M1.5 1 L13.5 13 M13.5 1 L1.5 13" stroke="#e05a38" stroke-width="2.3" stroke-linecap="round"/></svg><div class="t" style="left:-410.5px;top:528.31px;width:600px;text-align:right;font-size:10.5px;font-weight:normal;color:#333333;">8</div><div class="t" style="left:201px;top:528.31px;font-size:10.5px;font-weight:normal;color:#333333;letter-spacing:-0.315px;">AF2033</div><div class="t" style="left:313.9px;top:528.31px;font-size:10.5px;font-weight:normal;color:#333333;letter-spacing:-0.63px;">REFRIGERANTE MEZCLA PRECISA VERDE AL 33% 1/6 GL</div><div class="t" style="left:598.2px;top:528.31px;font-size:10.5px;font-weight:normal;color:#333333;letter-spacing:-1.282px;">PRESTONE</div><div class="t" style="left:166.5px;top:528.31px;width:600px;text-align:right;font-size:10.5px;font-weight:normal;color:#333333;letter-spacing:0.05px;">3,240.00</div><div class="t" style="left:289.5px;top:528.31px;width:600px;text-align:right;font-size:10.5px;font-weight:normal;color:#333333;letter-spacing:0.1px;">19.302400</div><div class="t" style="left:413px;top:528.31px;width:600px;text-align:right;font-size:10.5px;font-weight:normal;color:#333333;letter-spacing:0.05px;">62,539.78</div><div style="left:1081px;top:64px;width:1px;height:499px;background:#1b2139"></div><div style="left:64px;top:562px;width:1018px;height:1px;background:#1b2139"></div><svg style="position:absolute;left:100px;top:390px" width="11" height="9" viewBox="0 0 11 9"><path d="M0.5 4.5 H9.5 M6 1 L9.5 4.5 L6 8" fill="none" stroke="#3b7ddd" stroke-width="1.2"/></svg>
</body></html>
